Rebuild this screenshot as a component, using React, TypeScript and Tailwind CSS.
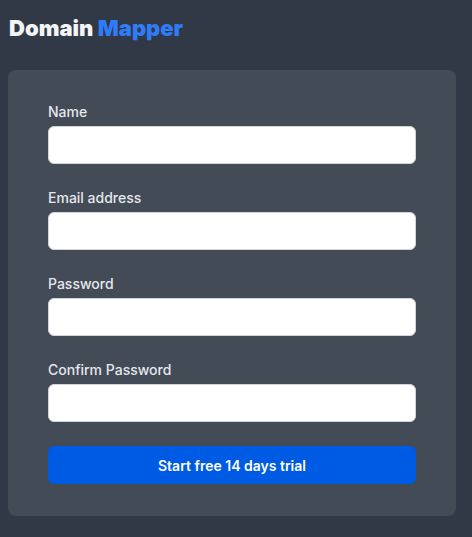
import React from 'react';

const fields = [
  { label: 'Name', type: 'text' },
  { label: 'Email address', type: 'email' },
  { label: 'Password', type: 'password' },
  { label: 'Confirm Password', type: 'password' },
];

const App: React.FC = () => {
  return (
    <div className="min-h-screen bg-[#313846] p-2 font-['Inter',sans-serif]">
      <h1 className="mt-[4px] mb-[26px] pl-px text-[22px] leading-8 font-black text-[#f3f4f6]">
        Domain <span className="text-[#2f7cf6]">Mapper</span>
      </h1>

      <div className="w-[448px] rounded-lg bg-[#434b57] px-10 pt-8 pb-8">
        <form className="flex flex-col gap-6" onSubmit={(e) => e.preventDefault()}>
          {fields.map((f) => (
            <div key={f.label} className="flex flex-col gap-1">
              <label className="text-[14px] leading-5 font-medium text-[#e5e7eb]">{f.label}</label>
              <input
                type={f.type}
                className="h-[38px] w-full rounded-md border border-[#d1d5db] bg-white px-3 text-sm"
              />
            </div>
          ))}
          <button
            type="submit"
            className="h-[38px] w-full rounded-md bg-[#005be4] text-[14px] font-semibold text-white"
          >
            Start free 14 days trial
          </button>
        </form>
      </div>
    </div>
  );
};

export default App;
